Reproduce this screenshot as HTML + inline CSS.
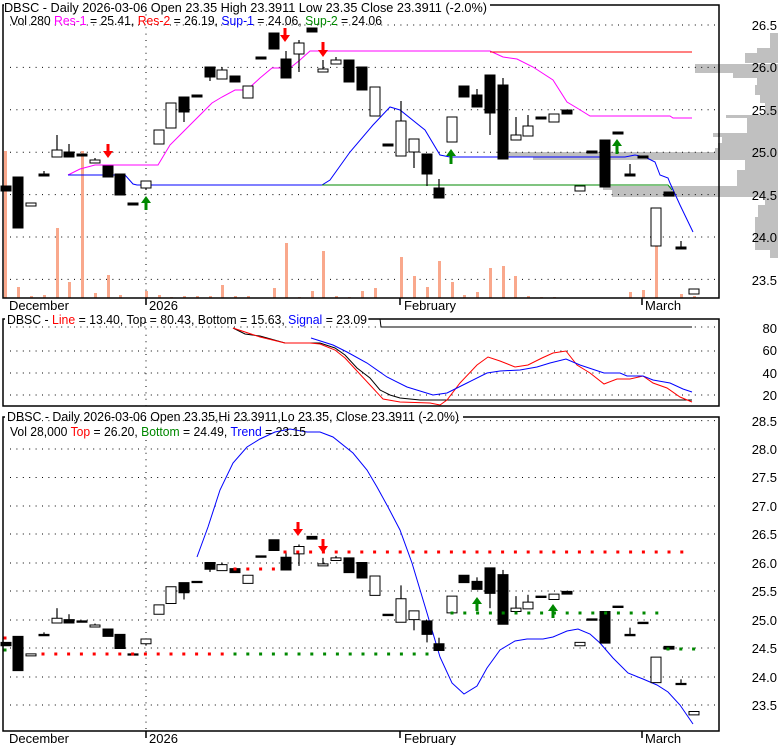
<!DOCTYPE html>
<html><head><meta charset="utf-8"><style>
html,body{margin:0;padding:0;background:#fff;width:780px;height:745px;overflow:hidden}
svg{display:block;font-family:"Liberation Sans",Arial,sans-serif;font-size:13px}
</style></head><body>
<svg id="s" width="780" height="745" viewBox="0 0 780 745" xmlns="http://www.w3.org/2000/svg">
<rect width="780" height="745" fill="#fff"/>
<g id="prof" fill="#c0c0c0"></g>
<g id="grid" stroke="#000" stroke-width="1" stroke-dasharray="1,5.4" fill="none"></g>
<g id="vol" fill="#f9a88c"></g>
<g id="lines1" fill="none" stroke-width="1"></g>
<g id="c1"></g>
<g id="c3" transform="matrix(1,0,0,0.671,0,517.6)"></g>
<g id="extra"></g>
<!-- frames -->
<g stroke="#000" stroke-width="1.5" fill="none">
<path d="M3,9 V298 H719 V5 H490"/><path d="M3,9 V5 H4"/>
<path d="M3,323 V406 H719 V319 H369"/><path d="M3,323 V319 H5"/>
<path d="M3,421 V731 H719 V417 H463"/><path d="M3,421 V417 H5"/>
<path d="M146,298 V305 M400,298 V305 M642,298 V305 M146,731 V738 M400,731 V738 M642,731 V738"/>
</g>
<g fill="#000">
<text x="4" y="12" textLength="483" lengthAdjust="spacingAndGlyphs">DBSC - Daily 2026-03-06 Open 23.35  High 23.3911  Low 23.35  Close 23.3911 (-2.0%)</text>
<text x="10" y="25" textLength="372" lengthAdjust="spacingAndGlyphs">Vol 280 <tspan fill="#f0f">Res-1</tspan> = 25.41, <tspan fill="#f00">Res-2</tspan> = 26.19, <tspan fill="#00f">Sup-1</tspan> = 24.06, <tspan fill="#080">Sup-2</tspan> = 24.06</text>
<text x="7" y="324" textLength="360" lengthAdjust="spacingAndGlyphs">DBSC - <tspan fill="#f00">Line</tspan> = 13.40, Top = 80.43, Bottom = 15.63, <tspan fill="#00f">Signal</tspan> = 23.09</text>
<text x="7" y="421" textLength="452" lengthAdjust="spacingAndGlyphs">DBSC - Daily 2026-03-06 Open 23.35,Hi 23.3911,Lo 23.35, Close 23.3911 (-2.0%)</text>
<text x="10" y="436" textLength="296" lengthAdjust="spacingAndGlyphs">Vol 28,000 <tspan fill="#f00">Top</tspan> = 26.20, <tspan fill="#080">Bottom</tspan> = 24.49, <tspan fill="#00f">Trend</tspan> = 23.15</text>
<text x="9" y="310">December</text><text x="149" y="310">2026</text><text x="404" y="310">February</text><text x="645" y="310">March</text>
<text x="9" y="743">December</text><text x="149" y="743">2026</text><text x="404" y="743">February</text><text x="645" y="743">March</text>
<g text-anchor="end">
<text x="777" y="30">26.5</text><text x="777" y="72">26.0</text><text x="777" y="115">25.5</text><text x="777" y="157">25.0</text><text x="777" y="200">24.5</text><text x="777" y="242">24.0</text><text x="777" y="285">23.5</text>
<text x="777" y="333">80</text><text x="777" y="355">60</text><text x="777" y="378">40</text><text x="777" y="400">20</text>
<text x="777" y="426">28.5</text><text x="777" y="454">28.0</text><text x="777" y="482">27.5</text><text x="777" y="511">27.0</text><text x="777" y="539">26.5</text><text x="777" y="568">26.0</text><text x="777" y="596">25.5</text><text x="777" y="625">25.0</text><text x="777" y="653">24.5</text><text x="777" y="682">24.0</text><text x="777" y="710">23.5</text>
</g>
</g>
</svg>
<script>
var NS="http://www.w3.org/2000/svg";
function el(p,t,a){var e=document.createElementNS(NS,t);for(var k in a)e.setAttribute(k,a[k]);document.getElementById(p).appendChild(e);return e;}
// profile
[[33,17,770],[48,5,757],[53,10,745],[64,9,695],[73,5,733],[78,7,757],[85,10,755],[95,8,760],[103,12,765],[115,3,726],[118,15,747],[133,4,713],[137,6,722],[143,5,718],[148,4,715],[152,5,498],[157,3,533],[160,10,745],[170,16,737],[186,4,603],[190,7,612],[197,8,765],[205,12,758],[217,33,755],[250,8,770]].forEach(function(b){el("prof","rect",{x:b[2],y:b[0],width:778-b[2],height:b[1]});});
// grid
[25,67.4,109.8,152.2,194.6,237,279.4,327,351,373,395,420.6,449,477.5,506,534,563,591,620,648,677,705].forEach(function(y){el("grid","line",{x1:10,y1:y,x2:720,y2:y});});
el("grid","line",{x1:146,y1:8,x2:146,y2:298});el("grid","line",{x1:146,y1:322,x2:146,y2:406});el("grid","line",{x1:146,y1:440,x2:146,y2:731});
// volume
[[5,151],[18,287],[31,296],[44,295],[57,228],[69,282],[82,151],[95,293],[108,275],[120,295],[146,291],[159,295],[171,297],[184,296],[197,296],[210,296],[222,285],[235,296],[248,296],[274,288],[286,243],[299,297],[312,291],[323,251],[336,296],[349,297],[362,291],[375,288],[401,257],[414,276],[427,287],[439,261],[452,282],[464,295],[477,292],[490,268],[503,266],[515,276],[528,296],[541,297],[554,297],[630,292],[643,290],[656,246],[681,294],[694,296]].forEach(function(v){el("vol","rect",{x:v[0]-1,y:v[1],width:3,height:298-v[1]});});
function pl(g,c,pts,w){el(g,"polyline",{points:pts,stroke:c,"stroke-width":w||1,fill:"none"});}
pl("lines1","#f0f","68,175 80,169 95,165 158,165 170,145 185,130 200,115 212,103 222,97 235,90 247,90 260,78 272,68 290,68 300,60 310,51 490,51 503,57 517,59 533,67 553,80 567,102 577,108 590,116 670,116 673,118 692,118");
pl("lines1","#f00","490,52 692,52");
pl("lines1","#00f","68,175 125,175 133,184 137,185 322,185 330,180 350,152 373,125 390,107 400,110 425,130 440,155 450,157 625,157 635,155 645,157 655,162 660,175 668,178 670,183 680,205 693,232");
pl("lines1","#080","322,185 668,185 672,190");
// panel2
pl("lines1","#000","368,319 380,319 381,327 692,327");
pl("lines1","#000","233,328 245,334 260,336 285,343 320,343 335,348 345,355 357,368 370,378 380,390 390,395 400,398 420,400 692,400");
pl("lines1","#f00","233,328 260,337 285,343 310,343 320,344 335,350 345,358 357,371 370,385 383,399 400,402 430,403 440,405 447,400 460,383 477,365 488,357 500,361 515,367 528,365 542,358 553,353 566,351 577,365 590,373 604,384 617,379 630,379 643,376 653,383 667,388 680,397 692,402");
pl("lines1","#00f","311,338 333,345 347,352 367,363 387,377 407,387 433,395 447,393 467,383 487,373 500,371 520,370 537,367 550,363 566,359 580,365 604,373 620,373 627,376 643,376 653,380 670,383 683,389 692,392");
// panel3 trend
pl("lines1","#00f","197,557 208,527 220,490 233,463 247,447 260,439 275,432 290,429 307,432 320,432 333,437 353,453 367,470 377,487 388,507 400,530 412,563 427,613 440,657 452,683 464,694 477,686 487,668 500,650 515,641 527,639 543,639 553,637 567,631 578,629 590,634 600,643 613,658 628,673 643,679 657,685 668,692 680,705 693,724");
// candles
var C=[[6,186,191,1],[18,177,228,1],[31,203,206,0],[44,174,176,1,171],[57,150,157,0,135],[69,152,157,1,144],[82,154,156,1],[95,160,163,0,158],[108,166,177,1],[120,174,195,1],[133,203,205,1],[146,181,188,0,181,190],[159,130,144,0],[171,103,128,0],[184,97,112,1,97,122],[197,95,97,1],[210,67,77,1,67,81],[222,70,79,0,67],[235,76,82,1],[248,86,98,0],[261,57,59,1],[274,33,49,1],[286,59,78,1,51],[299,43,54,0,40,72],[312,28,32,1],[323,69,72,0,60],[336,60,64,0,57],[349,60,82,1],[362,67,90,1],[375,87,116,0],[388,144,146,1],[401,121,156,0,101],[414,139,152,0,139,168],[427,154,174,1,154,186],[439,188,198,1,179],[452,117,142,0],[464,86,97,1],[477,95,107,1,89],[490,75,113,1,75,135],[503,85,159,1,78],[516,135,140,0,117],[528,126,136,0,115],[541,117,119,1],[554,114,122,0],[567,110,114,1],[580,186,191,0],[592,151,153,1],[605,140,187,1],[618,132,134,1],[630,174,176,1,164],[643,156,158,1],[656,208,246,0],[669,192,196,1],[681,247,249,1,241],[694,289,294,0]];
["c1","c3"].forEach(function(g){C.forEach(function(c){
 var x=c[0],t=c[1],b=c[2],f=c[3],wt=c[4]||t,wb=c[5]||b;
 if(wt<t||wb>b)el(g,"line",{x1:x,y1:wt,x2:x,y2:wb,stroke:"#000","stroke-width":1.2,"vector-effect":"non-scaling-stroke"});
 el(g,"rect",{x:x-5,y:t,width:10,height:Math.max(b-t,1.5),fill:f?"#000":"#fff",stroke:"#000","stroke-width":1,"vector-effect":"non-scaling-stroke"});
});});
function arrow(x,y0,y1,c,up){var p;
 if(!up)p=[x-1.5,y0,x+1.5,y0,x+1.5,y1-7,x+5,y1-7,x,y1,x-5,y1-7,x-1.5,y1-7];
 else p=[x-1.5,y1,x+1.5,y1,x+1.5,y0+7,x+5,y0+7,x,y0,x-5,y0+7,x-1.5,y0+7];
 el("extra","polygon",{points:p.join(" "),fill:c});}
arrow(108,144,158,"#f00");arrow(285,28,42,"#f00");arrow(323,42,57,"#f00");
arrow(146,196,210,"#080",1);arrow(451,149,164,"#080",1);arrow(617,139,154,"#080",1);
arrow(298,522,536,"#f00");arrow(323,539,553,"#f00");arrow(477,597,611,"#080",1);arrow(553,604,618,"#080",1);
function dots(c,y,x0,x1){for(var x=x0;x<=x1+1;x+=12.8)el("extra","rect",{x:x-1.5,y:y-1.5,width:3,height:3,fill:c});}
dots("#f00",654,43,222);dots("#080",654,235,438);dots("#f00",569,235,273);dots("#f00",552,285,693);dots("#080",613,452,656);dots("#080",649,668,693);
el("extra","rect",{x:3.5,y:636.5,width:3,height:3,fill:"#f00"});el("extra","rect",{x:3.5,y:648.5,width:3,height:3,fill:"#080"});
</script>
</body></html>
